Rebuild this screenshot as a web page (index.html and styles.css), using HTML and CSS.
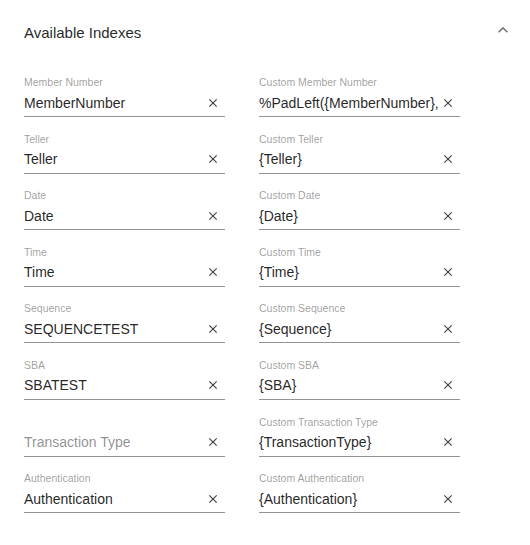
FILE: index.html
```html
<!DOCTYPE html>
<html lang="en">
<head>
  <meta charset="UTF-8">
  <title>Available Indexes</title>
  <link rel="stylesheet" href="styles.css">
</head>
<body>

  <div class="panel">
    <div class="panel-header">
      <h2>Available Indexes</h2>
      <button class="toggle" title="Collapse">
        <svg viewBox="0 0 24 24" width="20" height="20"><path d="M12 8l-6 6 1.41 1.41L12 10.83l4.59 4.58L18 14z"/></svg>
      </button>
    </div>

    <div class="fields" id="fields">
      <!-- filled by script -->
    </div>
  </div>

  <script>
    const indexes = [
      ["Member Number", "MemberNumber", "%PadLeft({MemberNumber}, 10, 0)"],
      ["Teller", "Teller", "{Teller}"],
      ["Date", "Date", "{Date}"],
      ["Time", "Time", "{Time}"],
      ["Sequence", "SEQUENCETEST", "{Sequence}"],
      ["SBA", "SBATEST", "{SBA}"],
      ["Transaction Type", "", "{TransactionType}"],
      ["Authentication", "Authentication", "{Authentication}"]
    ];

    const closeIcon = '<svg viewBox="0 0 24 24" width="14" height="14"><path d="M19 6.41L17.59 5 12 10.59 6.41 5 5 6.41 10.59 12 5 17.59 6.41 19 12 13.41 17.59 19 19 17.59 13.41 12z"/></svg>';

    function feld(label, wert) {
      const div = document.createElement("div");
      div.className = "field" + (wert ? "" : " empty");

      const lbl = document.createElement("label");
      lbl.innerText = label;
      div.appendChild(lbl);

      const row = document.createElement("div");
      row.className = "field-row";

      const input = document.createElement("input");
      input.type = "text";
      input.value = wert;
      if (!wert) input.placeholder = label;
      row.appendChild(input);

      const clear = document.createElement("span");
      clear.className = "clear";
      clear.innerHTML = closeIcon;
      clear.addEventListener("click", () => { input.value = ""; });
      row.appendChild(clear);

      div.appendChild(row);
      return div;
    }

    const container = document.getElementById("fields");
    indexes.forEach(([name, wert, custom]) => {
      container.appendChild(feld(name, wert));
      container.appendChild(feld("Custom " + name, custom));
    });
  </script>

</body>
</html>
```

FILE: styles.css
```css
body {
  margin: 0;
  font-family: "Liberation Sans", Arial, sans-serif;
  background: #fff;
  color: rgba(0, 0, 0, 0.87);
}
.panel {
  padding: 0 17px 0 24px;
}
.panel-header {
  display: flex;
  align-items: center;
  justify-content: space-between;
  height: 64px;
}
.panel-header h2 {
  margin: 0;
  font-size: 15px;
  font-weight: 400;
  color: rgba(0, 0, 0, 0.87);
}
.toggle {
  border: none;
  background: none;
  padding: 0;
  margin-top: -5px;
  fill: rgba(0, 0, 0, 0.54);
  cursor: pointer;
}
.toggle svg {
  display: block;
}
.fields {
  display: grid;
  grid-template-columns: 201px 201px;
  column-gap: 34px;
  row-gap: 14.6px;
  margin-top: 11px;
}
.field label {
  display: block;
  font-size: 10.5px;
  line-height: 14px;
  color: rgba(0, 0, 0, 0.4);
}
.field.empty label {
  visibility: hidden;
}
.field-row {
  display: flex;
  align-items: center;
  height: 27px;
  border-bottom: 1px solid rgba(0, 0, 0, 0.42);
}
.field-row input {
  flex: 1;
  min-width: 0;
  border: none;
  outline: none;
  padding: 0;
  font-family: inherit;
  font-size: 14px;
  color: rgba(0, 0, 0, 0.87);
  background: transparent;
}
.field-row input::placeholder {
  color: rgba(0, 0, 0, 0.45);
}
.clear {
  margin: 0 5px 0 3px;
  fill: rgba(0, 0, 0, 0.75);
  cursor: pointer;
}
.clear svg {
  display: block;
}
```
